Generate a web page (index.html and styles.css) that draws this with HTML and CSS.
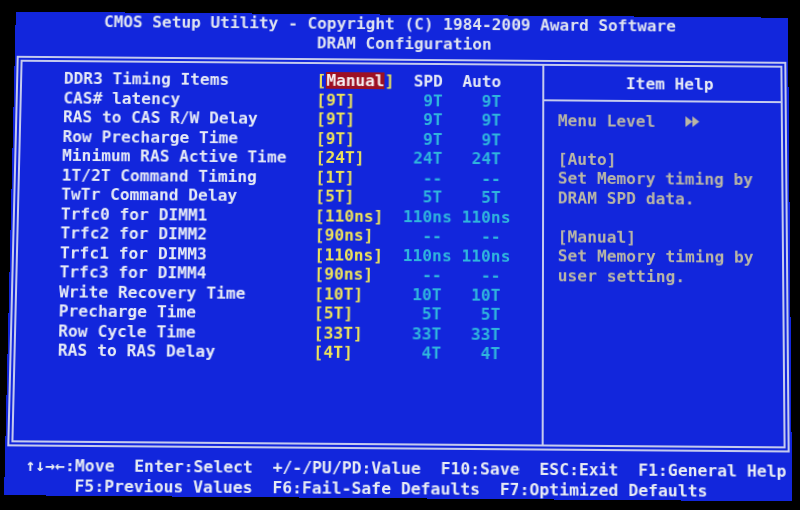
FILE: index.html
```html
<!DOCTYPE html>
<html lang="en">
<head>
<meta charset="utf-8">
<title>CMOS Setup Utility - DRAM Configuration</title>
<link rel="stylesheet" href="styles.css">
</head>
<body>
<div class="screen">
  <div class="title"><span>CMOS</span><span>Setup</span><span>Utility</span><span>-</span><span>Copyright</span><span>(C)</span><span>1984-2009</span><span>Award</span><span>Software</span></div>
  <div class="subtitle"><span>DRAM</span><span>Configuration</span></div>
  <div class="frame">
    <div class="main">
      <div class="row head"><span class="label">DDR3 Timing Items</span><span class="val">[<span class="sel">Manual</span>]</span><span class="num">SPD</span><span class="num auto">Auto</span></div>
      <div class="row"><span class="label">CAS# latency</span><span class="val">[9T]</span><span class="num">9T</span><span class="num auto">9T</span></div>
      <div class="row"><span class="label">RAS to CAS R/W Delay</span><span class="val">[9T]</span><span class="num">9T</span><span class="num auto">9T</span></div>
      <div class="row"><span class="label">Row Precharge Time</span><span class="val">[9T]</span><span class="num">9T</span><span class="num auto">9T</span></div>
      <div class="row"><span class="label">Minimum RAS Active Time</span><span class="val">[24T]</span><span class="num">24T</span><span class="num auto">24T</span></div>
      <div class="row"><span class="label">1T/2T Command Timing</span><span class="val">[1T]</span><span class="num">--</span><span class="num auto">--</span></div>
      <div class="row"><span class="label">TwTr Command Delay</span><span class="val">[5T]</span><span class="num">5T</span><span class="num auto">5T</span></div>
      <div class="row"><span class="label">Trfc0 for DIMM1</span><span class="val">[110ns]</span><span class="num ns">110ns</span><span class="num ns auto">110ns</span></div>
      <div class="row"><span class="label">Trfc2 for DIMM2</span><span class="val">[90ns]</span><span class="num">--</span><span class="num auto">--</span></div>
      <div class="row"><span class="label">Trfc1 for DIMM3</span><span class="val">[110ns]</span><span class="num ns">110ns</span><span class="num ns auto">110ns</span></div>
      <div class="row"><span class="label">Trfc3 for DIMM4</span><span class="val">[90ns]</span><span class="num">--</span><span class="num auto">--</span></div>
      <div class="row"><span class="label">Write Recovery Time</span><span class="val">[10T]</span><span class="num">10T</span><span class="num auto">10T</span></div>
      <div class="row"><span class="label">Precharge Time</span><span class="val">[5T]</span><span class="num">5T</span><span class="num auto">5T</span></div>
      <div class="row"><span class="label">Row Cycle Time</span><span class="val">[33T]</span><span class="num">33T</span><span class="num auto">33T</span></div>
      <div class="row"><span class="label">RAS to RAS Delay</span><span class="val">[4T]</span><span class="num">4T</span><span class="num auto">4T</span></div>
    </div>
    <div class="help">
      <div class="help-title">Item Help</div>
      <div class="help-body">
        <div class="line menu-level"><span>Menu Level</span><svg class="arrows" width="20" height="19" viewBox="0 0 20 19"><polygon points="1,4 8,9.5 1,15"/><polygon points="8,4 15,9.5 8,15"/></svg></div>
        <div class="line"></div>
        <div class="line">[Auto]</div>
        <div class="line">Set Memory timing by</div>
        <div class="line">DRAM SPD data.</div>
        <div class="line"></div>
        <div class="line">[Manual]</div>
        <div class="line">Set Memory timing by</div>
        <div class="line">user setting.</div>
      </div>
    </div>
  </div>
  <div class="footer">
    <div class="keys k1"><span>↑↓→←:Move</span><span>Enter:Select</span><span>+/-/PU/PD:Value</span><span>F10:Save</span><span>ESC:Exit</span><span>F1:General Help</span></div>
    <div class="keys k2"><span>F5:Previous Values</span><span>F6:Fail-Safe Defaults</span><span>F7:Optimized Defaults</span></div>
  </div>
</div>
</body>
</html>
```

FILE: styles.css
```css
html, body {
  margin: 0;
  padding: 0;
  background: #000;
}
body {
  width: 800px;
  height: 510px;
  overflow: hidden;
}
.screen {
  box-sizing: border-box;
  width: 780px;
  height: 484px;
  margin: 12px 0 0 10px;
  padding-left: 1px;
  background: #1226dc;
  font-family: "DejaVu Sans Mono", "Liberation Mono", monospace;
  font-size: 16.28px;
  font-weight: bold;
  line-height: 19.5px;
  color: #e4e8f4;
  display: flex;
  flex-direction: column;
  transform: rotate(0.45deg) perspective(1000px) rotateX(2.43deg);
  transform-origin: 50% 50%;
}
.title,
.subtitle {
  display: flex;
  gap: 1ch;
  height: 19.5px;
  color: #dfe3f0;
}
.title {
  padding-left: 9ch;
}
.subtitle {
  padding-left: 31ch;
}
.frame {
  box-sizing: border-box;
  width: 776px;
  height: 394px;
  margin: 6px 0 0 1px;
  border: 6px double #c5cbee;
  display: flex;
}
.main {
  box-sizing: border-box;
  width: 526px;
  padding: 7px 0 0 42px;
  border-right: 2px solid #c5cbee;
}
.row {
  display: grid;
  grid-template-columns: 26ch 9ch 5ch 1ch 5ch;
  height: 19.5px;
  white-space: pre;
}
.label {
  color: #e6eaf6;
}
.val {
  color: #ece25a;
}
.sel {
  display: inline-block;
  line-height: 17px;
  background: #9c1024;
  color: #f4eef0;
}
.num {
  text-align: right;
  padding-right: 1ch;
  color: #2fb5dd;
}
.num.ns {
  padding-right: 0;
}
.num.auto {
  grid-column: 5;
}
.head .num {
  color: #e6eaf6;
}
.help {
  flex: 1;
  display: flex;
  flex-direction: column;
}
.help-title {
  height: 19.5px;
  padding: 7.5px 0 6.5px calc(4px + 8ch);
  border-bottom: 2px solid #c5cbee;
  color: #e6eaf6;
}
.help-body {
  padding: 10px 0 0 calc(4px + 1ch);
  color: #b9b6a6;
}
.line {
  height: 19.5px;
  white-space: pre;
}
.menu-level {
  display: flex;
  align-items: flex-start;
}
.arrows {
  margin-left: 3ch;
  fill: #b9b6a6;
}
.footer {
  margin-top: 9.5px;
  display: flex;
  flex-direction: column;
}
.keys {
  display: flex;
  gap: 2ch;
  height: 19.5px;
  white-space: pre;
  color: #e8ecf4;
}
.k1 {
  padding-left: 2ch;
}
.k2 {
  padding-left: 7ch;
}
```
